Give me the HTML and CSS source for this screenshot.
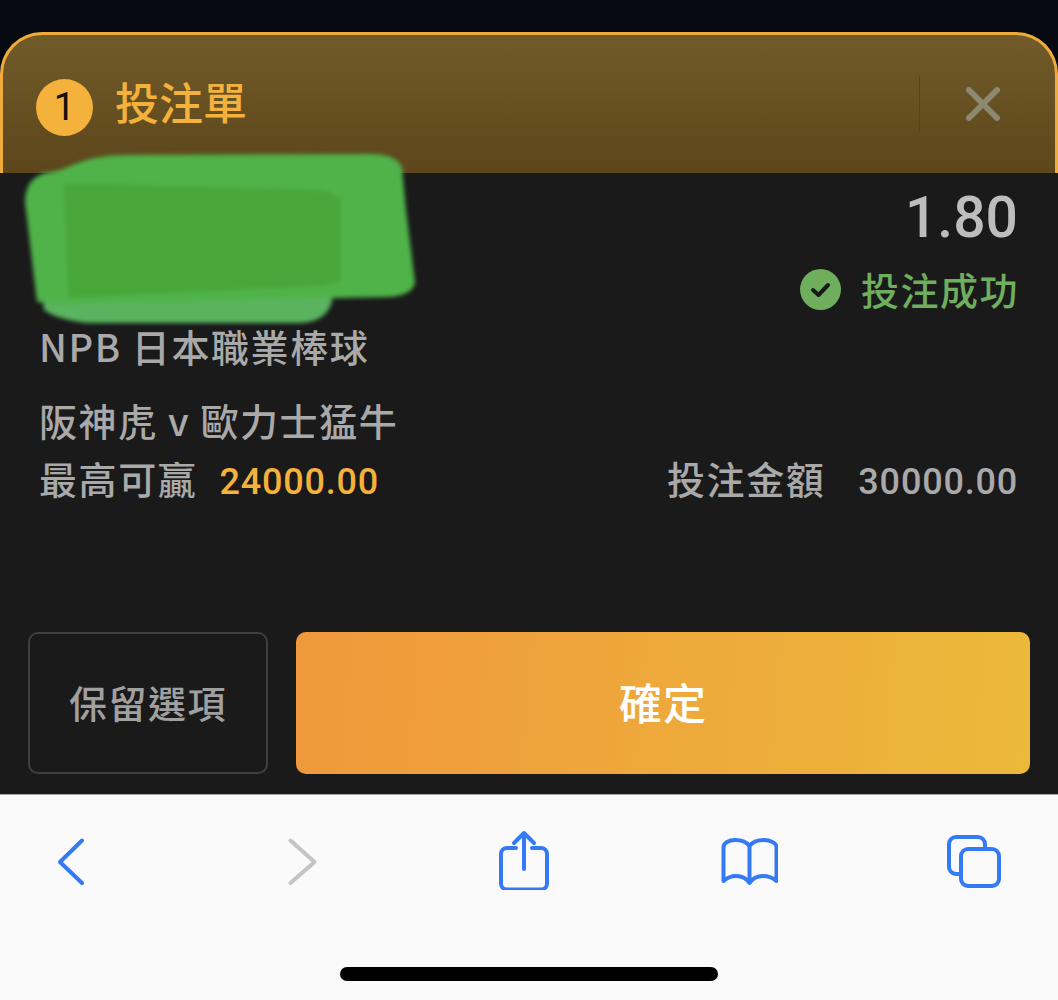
FILE: index.html
```html
<!DOCTYPE html>
<html lang="zh-Hant">
<head>
  <meta charset="UTF-8" />
  <title>投注單</title>
  <link rel="stylesheet" href="styles.css">
</head>
<body>
  <div class="top-strip"></div>

  <div class="sheet">
    <div class="sheet-head">
      <div class="count">1</div>
      <div class="sheet-title">投注單</div>
      <div class="head-divider"></div>
      <svg class="close-icon" width="34" height="34" viewBox="0 0 34 34">
        <path d="M3 3L31 31M31 3L3 31" />
      </svg>
    </div>

    <div class="sheet-body">
      <div class="bet">
        <div class="odds">1.80</div>
        <div class="status">
          <svg class="status-icon" width="41" height="41" viewBox="0 0 41 41">
            <circle cx="20.5" cy="20.5" r="20.5" />
            <path d="M13 21L18.500 26L28 16" />
          </svg>
          <span>投注成功</span>
        </div>
        <div class="line market">NPB 日本職業棒球</div>
        <div class="line match">阪神虎 v 歐力士猛牛</div>
        <div class="line stake">
          <div>最高可贏<span class="num win">24000.00</span></div>
          <div>投注金額<span class="num amount">30000.00</span></div>
        </div>
      </div>

      <div class="actions">
        <button class="btn-keep">保留選項</button>
        <button class="btn-confirm">確定</button>
      </div>
    </div>

    <!-- green marker scribbled over the selection name -->
    <svg class="scribble" width="430" height="190" viewBox="0 0 430 190">
      <path class="ink-light" d="M40 120L60 90L330 90L332 150Q326 170 300 171L88 171Q58 168 44 158Z" />
      <path class="ink" d="M25 50Q25 24 50 20Q60 19 70 14Q95 3 125 3L372 2Q398 3 402 16L406 58L415 130Q414 142 392 145L338 146L60 152L37 150Z" />
      <path class="ink-dark" d="M64 31L325 38L341 46L341 130L321 134L68 146Z" />
    </svg>
  </div>

  <div class="toolbar">
    <div class="tool-row">
      <svg class="tool" width="60" height="60" viewBox="0 0 60 60">
        <path d="M41 10.500L19 32L41 53" />
      </svg>
      <svg class="tool tool-off" width="60" height="60" viewBox="0 0 60 60">
        <path d="M23.500 10.500L47.500 32L23.500 53" />
      </svg>
      <svg class="tool" width="60" height="60" viewBox="0 0 60 60">
        <path d="M24 18H15a6 6 0 0 0-6 6V53.500a6 6 0 0 0 6 6H49a6 6 0 0 0 6-6V24a6 6 0 0 0-6-6H40" />
        <path d="M32 39V3M22 13L32 3L42 13" />
      </svg>
      <svg class="tool" width="60" height="60" viewBox="0 0 60 60">
        <path d="M31.500 16C28 11 22 10 17 10C11 10 5.500 13 5.500 17V51C10 47 14 46 18 46C24 46 29 49 31.500 53C34 49 39 46 45 46C49 46 54 47 58.500 51V17C58.500 13 52 10 46 10C41 10 35 11 31.500 16ZM31.500 16V53" />
      </svg>
      <svg class="tool" width="60" height="60" viewBox="0 0 60 60">
        <path d="M42 17V14a7 7 0 0 0-7-7H13a7 7 0 0 0-7 7V37a7 7 0 0 0 7 7H18" />
        <rect x="18" y="19" width="38" height="37" rx="7" />
      </svg>
    </div>
    <div class="home-bar"></div>
  </div>
</body>
</html>
```

FILE: styles.css
```css
* {
  box-sizing: border-box;
}

body {
  margin: 0;
  height: 1000px;
  overflow: hidden;
  display: flex;
  flex-direction: column;
  background: #1a1a1b;
  font-family: "Noto Sans CJK TC", "Noto Sans", sans-serif;
  color: #a9a9a9;
}

.top-strip {
  height: 32px;
  background: #070910;
}

.sheet {
  position: relative;
  height: 762px;
  background: #070910;
  display: flex;
  flex-direction: column;
}

.sheet-head {
  height: 141px;
  display: flex;
  align-items: center;
  padding-left: 34px;
  border: 3px solid #f0ac3a;
  border-bottom: 0;
  border-radius: 42px 42px 0 0;
  background: linear-gradient(#725b29, #5c461b);
}

.count {
  width: 57px;
  height: 57px;
  margin-top: 6px;
  margin-left: -1px;
  border-radius: 50%;
  background: #f4b13c;
  color: #111;
  font-family: Roboto, sans-serif;
  font-size: 38px;
  line-height: 57px;
  text-align: center;
}

.sheet-title {
  margin-left: 22px;
  margin-top: -6px;
  flex: 1;
  font-size: 44px;
  font-weight: 500;
  line-height: 60px;
  color: #f4b13c;
}

.head-divider {
  width: 1px;
  height: 56px;
  margin-left: 1px;
  background: #57431a;
}

.close-icon {
  margin: 0 55px 0 46px;
  stroke: #8c8872;
  stroke-width: 6;
  stroke-linecap: round;
  fill: none;
}

.sheet-body {
  flex: 1;
  display: flex;
  flex-direction: column;
  justify-content: space-between;
  background: #1a1a1b;
  padding: 15px 28px 20px;
}

.bet {
  padding: 0 12px 0 11px;
}

.odds {
  font-family: Roboto, sans-serif;
  font-size: 57px;
  font-weight: 500;
  line-height: 60px;
  text-align: right;
  color: #bdbdbd;
}

.status {
  margin-top: 18px;
  height: 44px;
  display: flex;
  justify-content: flex-end;
  align-items: center;
  gap: 20px;
  font-size: 38px;
  font-weight: 500;
  letter-spacing: 1.5px;
  color: #6fae5d;
}

.status svg {
  margin-top: 2px;
}

.status span {
  margin-right: -1px;
}

.status-icon circle {
  fill: #6fae5d;
}

.status-icon path {
  fill: none;
  stroke: #19191b;
  stroke-width: 4;
  stroke-linecap: round;
  stroke-linejoin: round;
}

.line {
  height: 44px;
  font-size: 38px;
  font-weight: 500;
  line-height: 44px;
  letter-spacing: 1.6px;
}

.market {
  margin-top: 14px;
}

.match {
  margin-top: 30px;
}

.stake {
  margin-top: 14px;
  display: flex;
  justify-content: space-between;
}

.num {
  font-family: Roboto, sans-serif;
  font-size: 36px;
  font-weight: 500;
  letter-spacing: 0.8px;
}

.win {
  margin-left: 22px;
  color: #f4b13c;
}

.amount {
  margin-left: 33px;
}

.actions {
  display: flex;
  gap: 28px;
  height: 142px;
}

.actions button {
  font-family: inherit;
  padding: 0 0 4px;
  border-radius: 10px;
}

.btn-keep {
  width: 240px;
  background: #1a1a1b;
  border: 2px solid #3f3f41;
  color: #a0a0a0;
  font-size: 38px;
  font-weight: 500;
  letter-spacing: 1.5px;
}

.btn-confirm {
  flex: 1;
  border: 0;
  background: linear-gradient(95deg, #f0983c, #ecb93a);
  color: #fff;
  font-size: 43px;
  font-weight: 500;
  letter-spacing: 1px;
}

.scribble {
  position: absolute;
  left: 0;
  top: 120px;
  filter: blur(2px);
}

.ink {
  fill: #50b34a;
}

.ink-dark {
  fill: #49a73a;
}

.ink-light {
  fill: #5ab45f;
}

.toolbar {
  flex: 1;
  background: #fafafb;
  border-top: 1px solid #a5a5a5;
  padding-top: 35px;
}

.tool-row {
  display: flex;
  justify-content: space-between;
  padding: 0 55px 0 41px;
}

.tool {
  fill: none;
  stroke: #3479f6;
  stroke-width: 4;
  stroke-linecap: round;
  stroke-linejoin: round;
}

.tool-off {
  stroke: #c4c4c4;
}

.home-bar {
  width: 378px;
  height: 14px;
  margin: 77px 0 0 340px;
  border-radius: 7px;
  background: #000;
}
```
